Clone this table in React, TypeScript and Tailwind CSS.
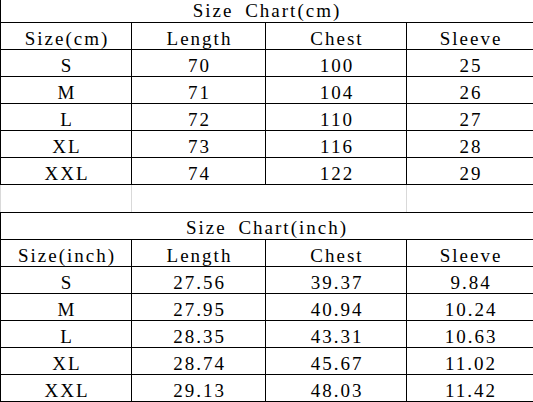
const cmRows = [
  ["S", "70", "100", "25"],
  ["M", "71", "104", "26"],
  ["L", "72", "110", "27"],
  ["XL", "73", "116", "28"],
  ["XXL", "74", "122", "29"],
]

const inchRows = [
  ["S", "27.56", "39.37", "9.84"],
  ["M", "27.95", "40.94", "10.24"],
  ["L", "28.35", "43.31", "10.63"],
  ["XL", "28.74", "45.67", "11.02"],
  ["XXL", "29.13", "48.03", "11.42"],
]

const cols = "grid grid-cols-[131px_134px_141px_127px]"
const cell =
  "flex h-[27px] items-end justify-center border-b border-l border-black pb-[1px] pl-[2px]"

const Row = ({ values }: { values: string[] }) => (
  <div className={cols}>
    {values.map((v, i) => (
      <div key={i} className={cell}>
        {v}
      </div>
    ))}
  </div>
)

const Chart = ({
  title,
  unit,
  rows,
  top,
}: {
  title: string
  unit: string
  rows: string[][]
  top?: boolean
}) => (
  <div className="flex flex-col">
    <div
      className={
        top
          ? "flex h-[23px] items-end justify-center border-b border-l border-black pb-[2px] [word-spacing:5px]"
          : "flex h-[28px] items-end justify-center border-t border-b border-l border-black pb-[2px] [word-spacing:5px]"
      }
    >
      {title}
    </div>
    <Row values={[`Size(${unit})`, "Length", "Chest", "Sleeve"]} />
    {rows.map((r) => (
      <Row key={r[0]} values={r} />
    ))}
  </div>
)

export default function App() {
  return (
    <div className="h-[402px] w-[533px] overflow-hidden bg-white font-['Liberation_Serif'] text-[19px] leading-none tracking-[2px] text-black">
      <Chart title="Size Chart(cm)" unit="cm" rows={cmRows} top />
      <div className={`${cols} h-[27px]`}>
        <div className="border-l border-[#d9d9d9]" />
        <div className="border-l border-[#d9d9d9]" />
        <div />
        <div className="border-l border-[#d9d9d9]" />
      </div>
      <Chart title="Size Chart(inch)" unit="inch" rows={inchRows} />
    </div>
  )
}
